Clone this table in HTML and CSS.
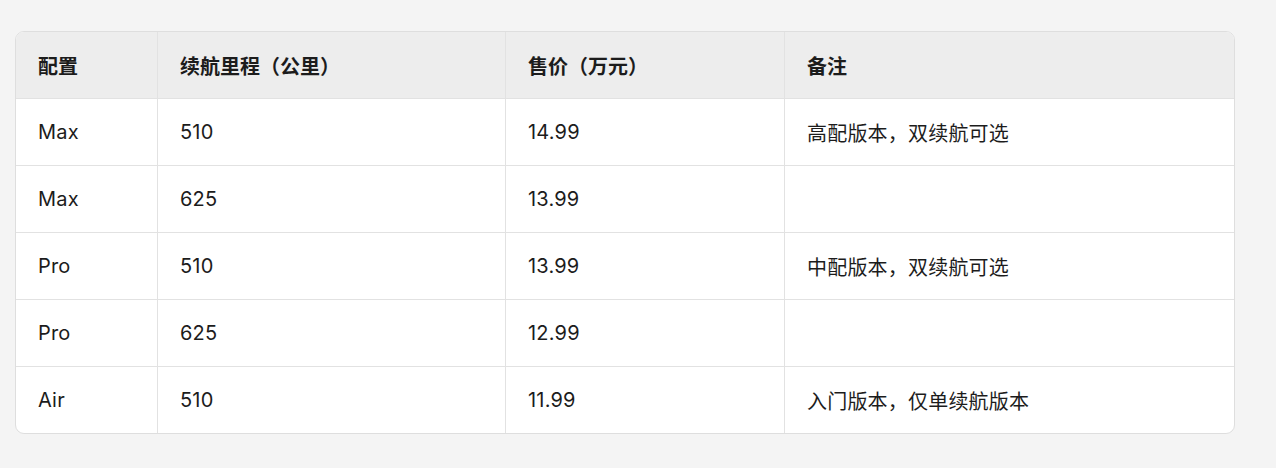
FILE: index.html
```html
<!DOCTYPE html>
<html lang="zh">
<head>
<meta charset="utf-8">
<link rel="stylesheet" href="styles.css">
</head>
<body>
<div class="wrap">
<table class="spec">
<colgroup>
<col class="c1"><col class="c2"><col class="c3"><col class="c4">
</colgroup>
<thead>
<tr><th>配置</th><th>续航里程（公里）</th><th>售价（万元）</th><th>备注</th></tr>
</thead>
<tbody>
<tr><td>Max</td><td>510</td><td>14.99</td><td>高配版本，双续航可选</td></tr>
<tr><td>Max</td><td>625</td><td>13.99</td><td></td></tr>
<tr><td>Pro</td><td>510</td><td>13.99</td><td>中配版本，双续航可选</td></tr>
<tr><td>Pro</td><td>625</td><td>12.99</td><td></td></tr>
<tr><td>Air</td><td>510</td><td>11.99</td><td>入门版本，仅单续航版本</td></tr>
</tbody>
</table>
</div>
</body>
</html>
```
FILE: styles.css
```css
html, body {
  margin: 0;
  padding: 0;
  background: #f4f4f4;
}
body {
  font-family: "Inter", "Noto Sans CJK SC", sans-serif;
  color: #1c1c1c;
}
.wrap {
  padding: 31px 0 0 15px;
}
.spec {
  width: 1220px;
  border-collapse: separate;
  border-spacing: 0;
  border: 1px solid #dedede;
  border-radius: 9px;
  overflow: hidden;
  background: #fff;
  table-layout: fixed;
}
.c1 { width: 142px; }
.c2 { width: 348px; }
.c3 { width: 279px; }
.c4 { width: auto; }
.spec th, .spec td {
  height: 67px;
  padding: 0 0 0 22px;
  text-align: left;
  font-size: 20px;
  border-right: 1px solid #e2e2e2;
  border-bottom: 1px solid #e2e2e2;
  box-sizing: border-box;
}
.spec th {
  background: #ededed;
  font-weight: 600;
}
.spec td {
  font-weight: 400;
  letter-spacing: 0.2px;
}
.spec th:last-child, .spec td:last-child { border-right: none; }
.spec tbody tr:last-child td { border-bottom: none; height: 66px; }
```
